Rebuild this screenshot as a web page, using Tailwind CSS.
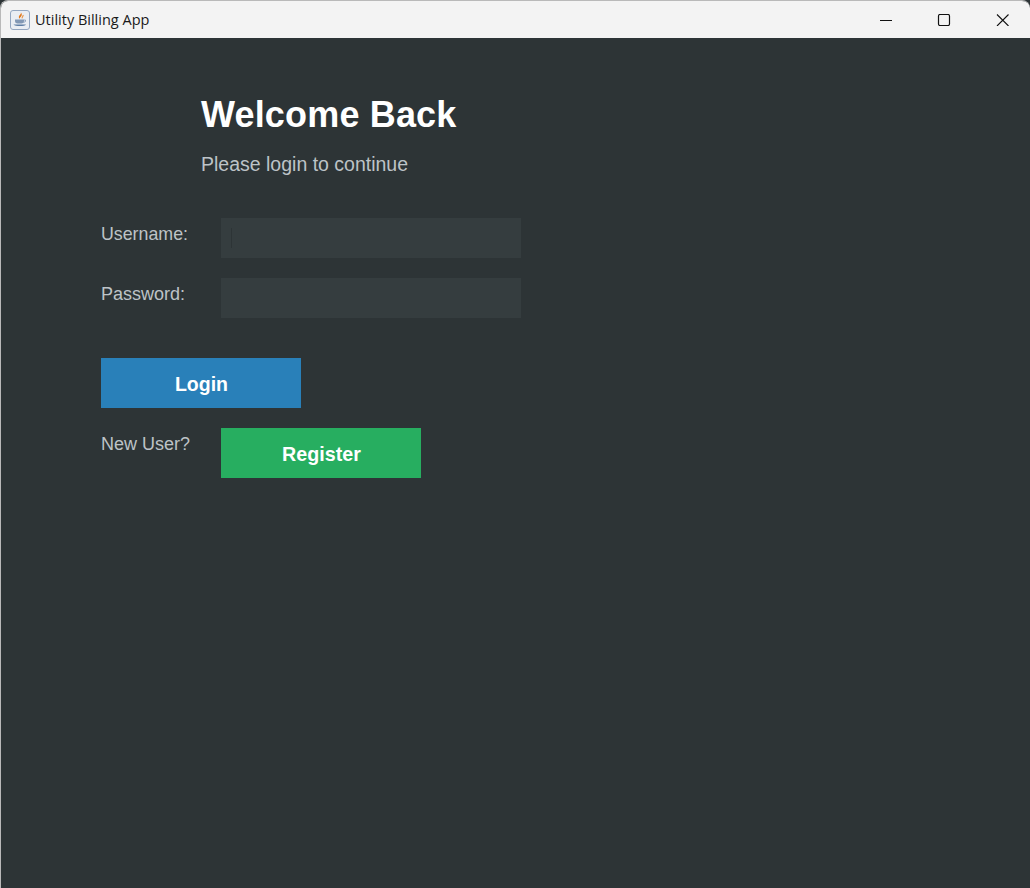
<!DOCTYPE html>
<html lang="en">
<head>
  <meta charset="UTF-8">
  <title>Utility Billing App</title>
  <script src="https://cdn.jsdelivr.net/npm/@tailwindcss/browser@4"></script>
</head>
<body class="bg-[#2d3436] font-['Liberation_Sans',Arial,sans-serif]">

  <div class="h-[888px] w-[1030px] flex flex-col overflow-hidden rounded-t-lg border-l border-t border-[#b9b9b9]">
    <!-- title bar -->
    <div class="h-[37px] bg-[#f3f3f3] flex items-center shrink-0">
      <svg class="ml-[9px] w-5 h-5" viewBox="0 0 20 20">
        <rect x="0.5" y="0.5" width="19" height="19" rx="2.5" fill="#e9edf3" stroke="#93a6c0"/>
        <path d="M10.500 2c2.200 2.200-3.800 3.500-.8 7c-.4-2 4.400-3.200 .8-7z" fill="#e2791c"/>
        <path d="M13 5c.8 1.200-1.400 1.800-.8 3.400" fill="none" stroke="#e58f3c" stroke-width="1.100"/>
        <path d="M5 9.500h9v1.500c0 1.800-1.500 2.500-2.500 2.500h-4c-1 0-2.500-.7-2.500-2.500z" fill="#8298b5"/>
        <path d="M14 10h1.500v1.500l-2 1" fill="none" stroke="#8298b5" stroke-width="0.800"/>
        <path d="M3.500 14.500h12.500c-1 2-11 2-12.500 0z" fill="#5f7fa6"/>
      </svg>
      <span class="ml-[5px] text-[14.5px] text-[#1a1a1a] font-['Open_Sans',sans-serif]">Utility Billing App</span>
      <div class="ml-auto flex items-center text-black translate-x-[3px]">
        <svg class="w-[58px] h-3" viewBox="0 0 58 12"><path d="M23 6.500h12" stroke="#111" stroke-width="1"/></svg>
        <svg class="w-[58px] h-3" viewBox="0 0 58 12"><rect x="23.500" y="0.500" width="11" height="11" rx="1.500" fill="none" stroke="#111" stroke-width="1.200"/></svg>
        <svg class="w-[60px] h-3" viewBox="0 0 60 12"><path d="M24 0.500l11.500 11.500M35.500 0.500L24 12" stroke="#111" stroke-width="1.100" fill="none"/></svg>
      </div>
    </div>

    <!-- login form -->
    <div class="pl-[100px] pt-[50px] text-[#bdc3c7]">
      <h1 class="ml-[100px] h-[54px] text-[36px] leading-[54px] font-bold text-white tracking-[0.17px]">Welcome Back</h1>
      <p class="ml-[100px] mt-[10px] h-[24px] text-[19.5px] leading-[24px]">Please login to continue</p>

      <div class="mt-[42px] flex items-start">
        <label class="w-[120px] text-[17.8px] leading-[32px]">Username:</label>
        <div class="relative w-[300px] h-[40px] bg-[#353d3f]">
          <div class="absolute left-[10px] top-[10px] w-px h-[20px] bg-[#2d3436]"></div>
        </div>
      </div>
      <div class="mt-[20px] flex items-start">
        <label class="w-[120px] text-[18px] leading-[32px]">Password:</label>
        <div class="w-[300px] h-[40px] bg-[#353d3f]"></div>
      </div>

      <button class="mt-[40px] block w-[200px] h-[50px] pt-[3px] pl-px bg-[#2980b9] text-white text-[19.5px] font-bold">Login</button>

      <div class="mt-[20px] flex items-start">
        <span class="w-[120px] text-[18px] leading-[32px]">New User?</span>
        <button class="w-[200px] h-[50px] pt-[3px] pl-px bg-[#27ae60] text-white text-[19.7px] font-bold">Register</button>
      </div>
    </div>
  </div>

</body>
</html>
